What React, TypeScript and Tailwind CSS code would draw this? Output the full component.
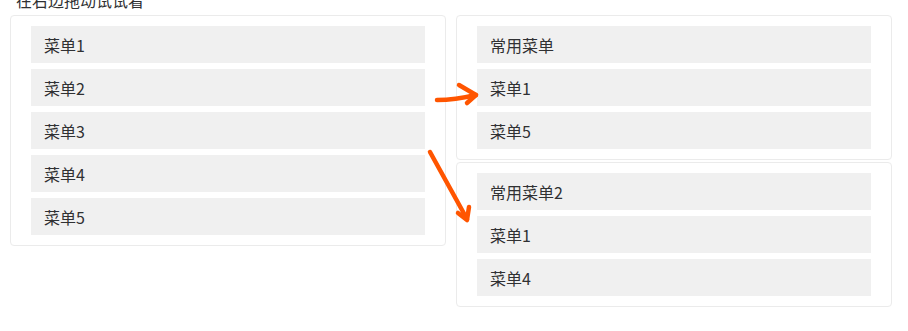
import React from "react";

const font = { fontFamily: '"Noto Sans CJK SC", "Noto Sans", sans-serif' };

function Item({ label }: { label: string }) {
  return (
    <div className="h-[37px] bg-[#f0f0f0] pl-[13px] flex items-center text-[16px] text-[#303133] leading-none">
      {label}
    </div>
  );
}

function Panel({ items, className = "" }: { items: string[]; className?: string }) {
  return (
    <div className={"border border-[#ebebeb] rounded-[4px] bg-white px-[20px] py-[10px] flex flex-col gap-[6px] " + className}>
      {items.map((t, i) => (
        <Item key={i} label={t} />
      ))}
    </div>
  );
}

export default function App() {
  return (
    <div className="relative w-[908px] h-[331px] bg-white overflow-hidden" style={font}>
      <div className="flex gap-[10px] pl-[10px]">
        <div className="w-[436px] flex flex-col">
          <div className="h-[15px] relative">
            <div className="absolute left-[6px] top-[-10px] text-[16px] leading-[20px] text-[#303133] whitespace-nowrap">
              在右边拖动试试看
            </div>
          </div>
          <Panel items={["菜单1", "菜单2", "菜单3", "菜单4", "菜单5"]} />
        </div>
        <div className="w-[436px] flex flex-col pt-[15px] gap-[2px]">
          <Panel items={["常用菜单", "菜单1", "菜单5"]} />
          <Panel items={["常用菜单2", "菜单1", "菜单4"]} />
        </div>
      </div>
      <svg className="absolute left-0 top-0 pointer-events-none" width="908" height="331" viewBox="0 0 908 331">
        <g fill="none" stroke="#ff5500" strokeWidth="4.5" strokeLinecap="round" strokeLinejoin="round">
          <path d="M437 100 Q455 100 476 95" />
          <path d="M459 85 L476 95 L467 103" />
          <path d="M430 152 L467 219" />
          <path d="M458 213 L467 220 L469 207" />
        </g>
      </svg>
    </div>
  );
}
